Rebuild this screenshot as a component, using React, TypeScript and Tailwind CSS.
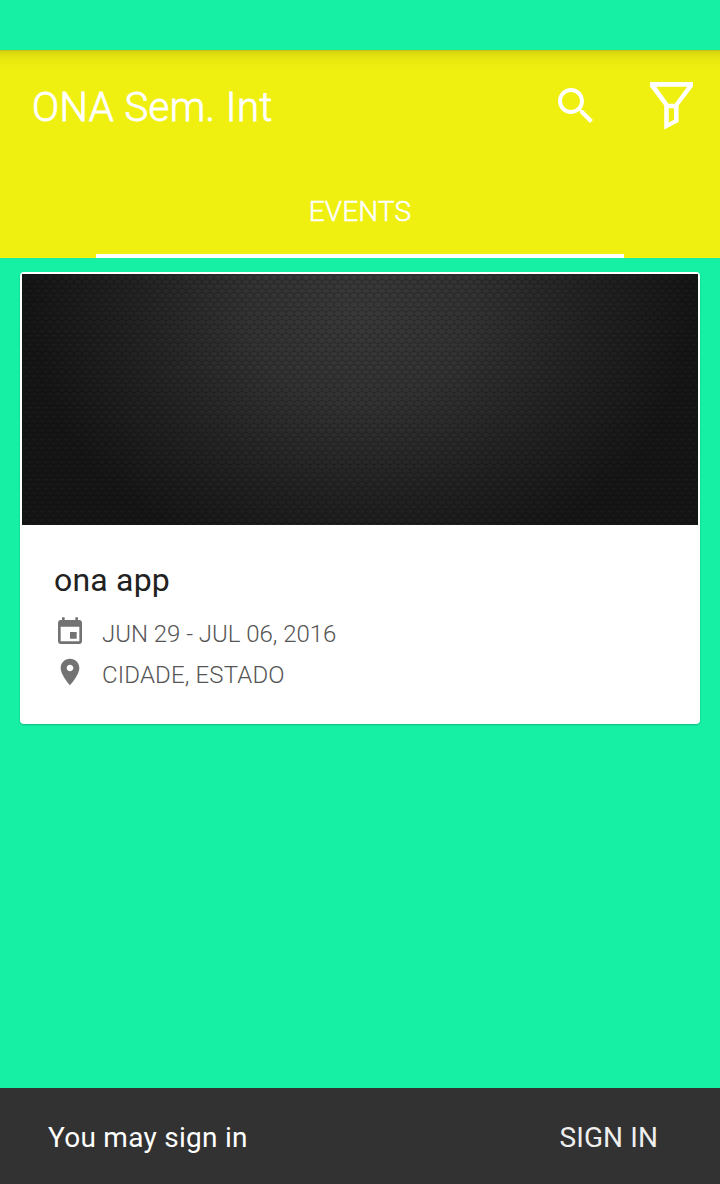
import React from "react";

function SearchIcon() {
  return (
    <svg viewBox="0 0 24 24" className="size-12" fill="currentColor" aria-hidden="true">
      <path d="M15.5 14h-.79l-.28-.27C15.41 12.59 16 11.11 16 9.5 16 5.91 13.09 3 9.5 3S3 5.91 3 9.5 5.91 16 9.5 16c1.61 0 3.09-.59 4.23-1.57l.27.28v.79l5 4.99L20.49 19l-4.99-5zm-6 0C7.01 14 5 11.99 5 9.5S7.01 5 9.5 5 14 7.01 14 9.5 11.99 14 9.5 14z" />
    </svg>
  );
}

function FilterIcon() {
  return (
    <svg viewBox="0 0 48 52" className="h-[52px] w-12" fill="currentColor" fillRule="evenodd" aria-hidden="true">
      <path d="M2 2H45V6.5L30.6 25.5V42L16.2 49.5V25.5L2 6.5ZM8.3 6.7L20.5 23.8H26.7L39.2 6.7ZM20.8 28.2V42.6L26 39.8V28.2Z" />
    </svg>
  );
}

function EventIcon() {
  return (
    <svg viewBox="0 0 24 24" className="size-8 shrink-0" fill="currentColor" aria-hidden="true">
      <path d="M17 12h-5v5h5v-5zM16 1v2H8V1H6v2H5c-1.11 0-1.99.9-1.99 2L3 19c0 1.1.89 2 2 2h14c1.1 0 2-.9 2-2V5c0-1.1-.9-2-2-2h-1V1h-2zm3 18H5V8h14v11z" />
    </svg>
  );
}

function PlaceIcon() {
  return (
    <svg viewBox="0 0 24 24" className="size-8 shrink-0" fill="currentColor" aria-hidden="true">
      <path d="M12 2C8.13 2 5 5.13 5 9c0 5.25 7 13 7 13s7-7.75 7-13c0-3.87-3.13-7-7-7zm0 9.5c-1.38 0-2.5-1.12-2.5-2.5s1.12-2.5 2.5-2.5 2.5 1.12 2.5 2.5-1.12 2.5-2.5 2.5z" />
    </svg>
  );
}

function Cover() {
  return (
    <svg viewBox="0 0 676 251" className="block h-[251px] w-full" aria-hidden="true">
      <defs>
        <radialGradient id="glow" gradientUnits="userSpaceOnUse" cx="0" cy="0" r="1" gradientTransform="translate(338 35) scale(330 270)">
          <stop offset="0" stopColor="#383838" />
          <stop offset="0.35" stopColor="#313131" />
          <stop offset="0.7" stopColor="#212121" />
          <stop offset="1" stopColor="#151515" />
        </radialGradient>
        <pattern id="mesh" width="8" height="9" patternUnits="userSpaceOnUse">
          <path d="M0 2L4 .2L8 2M0 2V5M8 2V5M0 5L4 6.8L8 5M4 6.8V9" fill="none" stroke="#000" strokeOpacity="0.2" strokeWidth="1" />
          <path d="M1.5 3H6.5M0 7.5H2.5M5.5 7.5H8" stroke="#fff" strokeOpacity="0.015" strokeWidth="1" />
        </pattern>
      </defs>
      <rect width="676" height="251" fill="url(#glow)" />
      <rect width="676" height="251" fill="url(#mesh)" />
    </svg>
  );
}

export default function App() {
  return (
    <div className="flex h-[1184px] w-[720px] flex-col overflow-hidden bg-[#16f0a5] font-['Roboto',sans-serif]">
      <div className="h-[50px] shrink-0" />
      <header className="flex h-52 shrink-0 flex-col bg-[#eff010] bg-[linear-gradient(to_bottom,#b5b317_0px,#d5d010_1px,#dfdc10_4px,#e9e710_9px,#eff010_19px)] text-white">
        <div className="flex h-28 items-center pr-6">
          <h1 className="flex-1 pt-1 pl-8 text-[40px] leading-none font-light tracking-[0.45px] [-webkit-text-stroke:0.8px_white]">ONA Sem. Int</h1>
          <button className="mr-12 flex" aria-label="Search"><SearchIcon /></button>
          <button className="flex" aria-label="Filter"><FilterIcon /></button>
        </div>
        <nav className="flex flex-1 justify-center">
          <button className="flex w-[528px] items-center justify-center border-b-4 border-white pt-2 text-[28px] leading-none font-light tracking-[0.1px] [-webkit-text-stroke:0.5px_white]">EVENTS</button>
        </nav>
      </header>
      <main className="flex-1 px-5 pt-3.5">
        <article className="h-[452px] rounded-[4px] bg-white p-0.5 shadow-[0_1px_2px_rgba(0,0,0,0.22)]">
          <Cover />
          <div className="px-8 pt-[37px]">
            <h2 className="text-[32px] leading-9 tracking-[0.2px] text-[#212121]">ona app</h2>
            <div className="mt-[18px] flex h-8 items-center gap-4 text-[#737373]">
              <EventIcon />
              <span className="pt-1 text-2xl leading-7 font-light tracking-[-0.03px] text-[#555]">JUN 29 - JUL 06, 2016</span>
            </div>
            <div className="mt-2 flex h-8 items-center gap-4 text-[#737373]">
              <PlaceIcon />
              <span className="pt-1.5 text-2xl leading-7 font-light tracking-[0.15px] text-[#555]">CIDADE, ESTADO</span>
            </div>
          </div>
        </article>
      </main>
      <footer className="flex h-24 shrink-0 items-center justify-between bg-[#323232] pt-1 pr-[62px] pl-12 text-[28px] text-white">
        <span className="tracking-[0.27px]">You may sign in</span>
        <button className="tracking-[0.1px] text-[#eeeeee]">SIGN IN</button>
      </footer>
    </div>
  );
}
